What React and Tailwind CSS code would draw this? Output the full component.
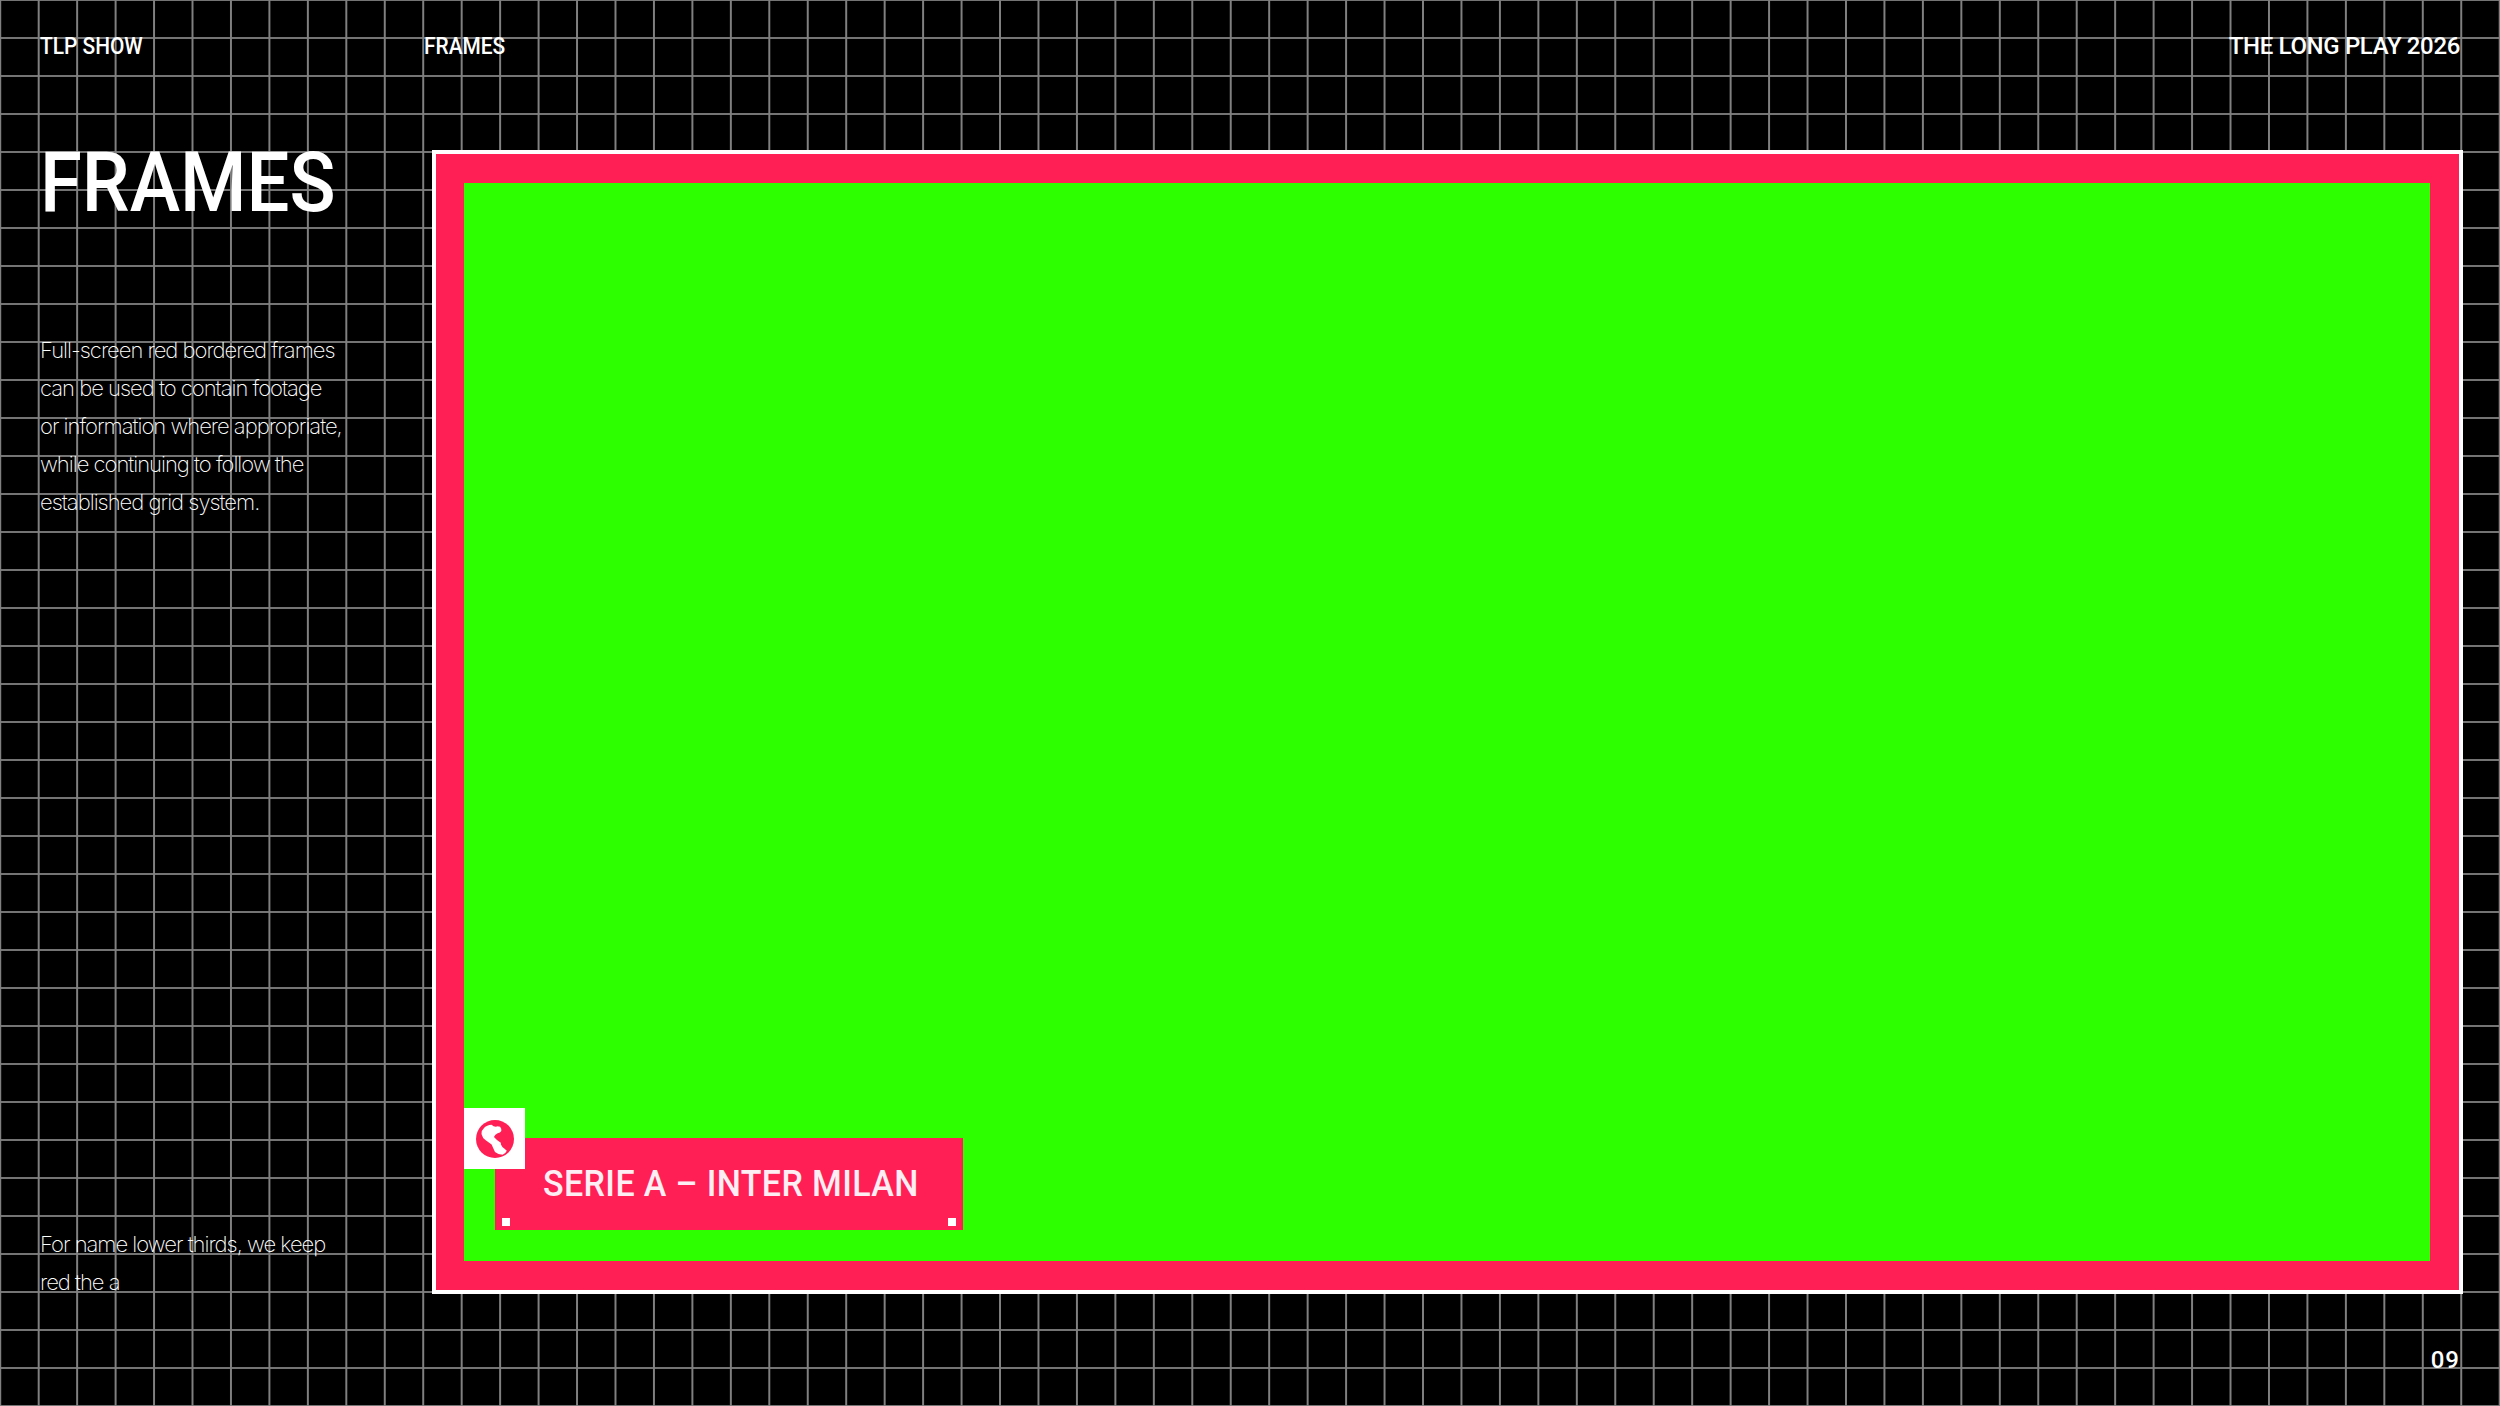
import React from "react";

const display = "font-['Roboto',sans-serif]";
const narrow = "origin-left scale-x-[0.87]";
const body = "font-['Inter',sans-serif] font-extralight text-[22px] leading-[38px] tracking-[-1px] text-white";

const GlobeIcon = () => {
  return (
    <svg viewBox="0 0 36 36" className="w-[38px] h-[38px]">
      <circle cx="18" cy="18" r="18" fill="#ff1f55" />
      <path
        d="M14.8 4.4 Q10 4.8 8 7.2 Q5 10 5.2 13.2 Q6 17 9.2 19.2 L14.8 23.2 Q16 26 18 30.4 Q21 33 25.2 33 Q28 32 29.2 29.2 Q27 27 25 25.5 Q23 23 23.5 21.5 Q20 19.5 17 16 Q18 13.5 20.5 12.5 Q23 12.4 24 10.4 Q24.4 8 22.8 6.4 Q20 5.6 18.8 6.4 Q16.5 6.4 14.8 4.4 Z"
        fill="#ffffff"
      />
    </svg>
  );
};

const App = () => {
  return (
    <div className="w-[2500px] h-[1406px] flex flex-col overflow-hidden bg-black bg-[linear-gradient(to_right,#808080_1.5px,transparent_1.5px),linear-gradient(to_bottom,#747474_2px,transparent_2px)] bg-[size:38.4615px_38px] bg-[position:-0.75px_0,0_-1px] text-white">
      {/* Header */}
      <header className={`flex h-[150px] pl-[40px] pr-[40px] pt-[31px] text-[24px] leading-[30px] font-medium ${display}`}>
        <div className={`w-[384px] ${narrow}`}>TLP SHOW</div>
        <div className={narrow}>FRAMES</div>
        <div className="ml-auto tracking-[-0.35px]">THE LONG PLAY 2026</div>
      </header>

      <div className="flex h-[1144px]">
        {/* Sidebar */}
        <aside className="w-[432px] pl-[40px] flex flex-col">
          <h1 className={`text-[84px] leading-[66px] font-medium origin-left scale-x-[0.905] ${display}`}>FRAMES</h1>
          <p className={`mt-[115px] ${body}`}>
            Full-screen red bordered frames
            <br />
            can be used to contain footage
            <br />
            or information where appropriate,
            <br />
            while continuing to follow the
            <br />
            established grid system.
          </p>
          <p className={`mt-auto -mb-[7px] ${body}`}>
            For name lower thirds, we keep
            <br />
            red the a
          </p>
        </aside>

        {/* Frame */}
        <main className="w-[2031px] border-4 border-white bg-[#ff1f55] pt-[29px] pl-[28px] pr-[29px] pb-[29px]">
          <div className="h-full bg-[#2dff00] flex flex-col justify-end pb-[31px]">
            <div className="relative ml-[31px] w-[468px] h-[92px] bg-[#ff1f55] flex items-center pl-[48px]">
              <div className="absolute -left-[31px] -top-[30px] w-[61px] h-[61px] bg-white flex items-center justify-center">
                <GlobeIcon />
              </div>
              <span className={`whitespace-nowrap text-[36px] font-medium tracking-[0.4px] text-[#fdeef4] origin-left scale-x-[0.945] ${display}`}>SERIE A – INTER MILAN</span>
              <span className="absolute left-[7px] bottom-[4px] w-[8px] h-[8px] bg-white" />
              <span className="absolute right-[7px] bottom-[4px] w-[8px] h-[8px] bg-white" />
            </div>
          </div>
        </main>
      </div>

      {/* Page number */}
      <footer className={`flex justify-end pr-[40px] pt-[51px] text-[24px] leading-[30px] font-medium tracking-[1px] ${display}`}>09</footer>
    </div>
  );
};

export default App;
